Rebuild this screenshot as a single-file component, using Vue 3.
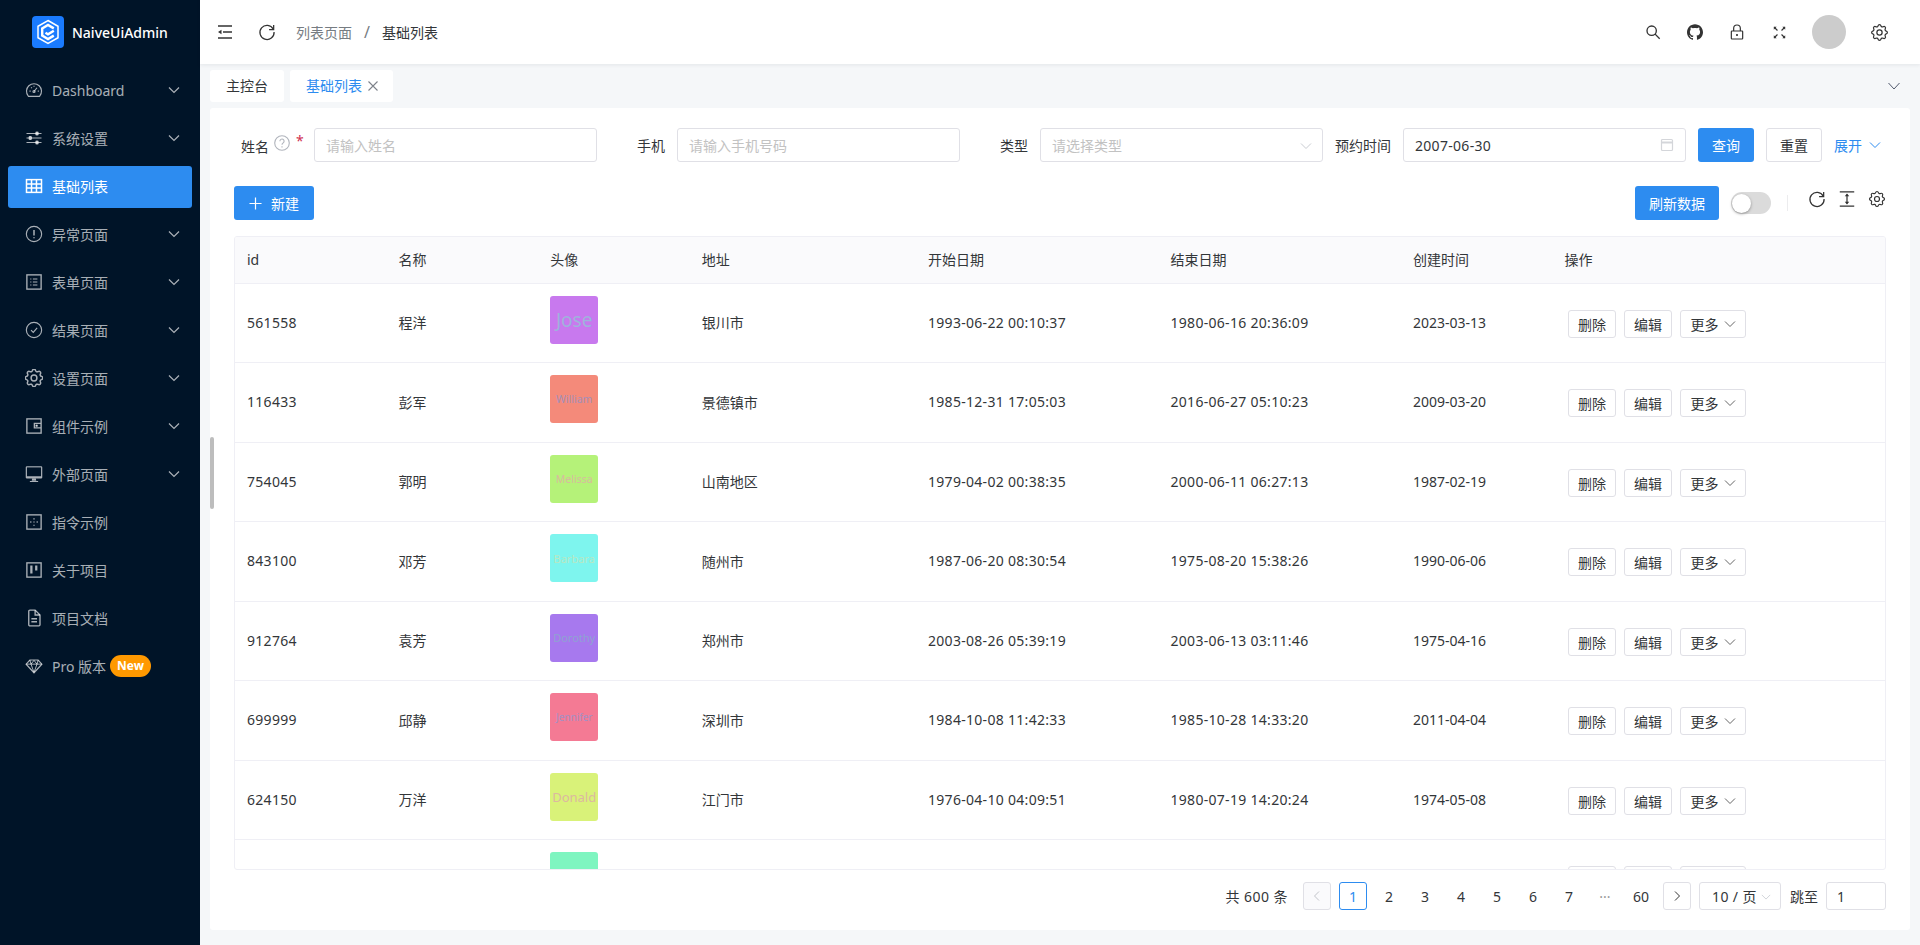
<script setup>
const gear = '<path d="M10.325 4.317c.426-1.756 2.924-1.756 3.35 0a1.724 1.724 0 0 0 2.573 1.066c1.543-.94 3.31.826 2.37 2.37a1.724 1.724 0 0 0 1.065 2.572c1.756.426 1.756 2.924 0 3.35a1.724 1.724 0 0 0-1.066 2.573c.94 1.543-.826 3.31-2.37 2.37a1.724 1.724 0 0 0-2.572 1.065c-.426 1.756-2.924 1.756-3.35 0a1.724 1.724 0 0 0-2.573-1.066c-1.543.94-3.31-.826-2.37-2.37a1.724 1.724 0 0 0-1.065-2.572c-1.756-.426-1.756-2.924 0-3.35a1.724 1.724 0 0 0 1.066-2.573c-.94-1.543.826-3.31 2.37-2.37c1 .608 2.296.07 2.572-1.065z"/><circle cx="12" cy="12" r="3"/>'
const refresh = '<path d="M19.5 8.5A8.5 8.5 0 1 0 20.5 12"/><path d="M20 3.5v5.5h-5.5" stroke-linejoin="miter"/>'
const icons = {
  dash: '<path d="M5.2 20.5h13.6a1 1 0 0 0 .8-.4A10 10 0 1 0 4.4 20.1a1 1 0 0 0 .8.4z"/><path d="M12 14l4-5M6 13.5h1.5M17 13.5h1.5M8.2 8.5l1 1M12 6.2v1.5"/><circle cx="12" cy="14" r="1.4"/>',
  slider: '<path d="M2 6h20M2 12h20M2 18h20"/><rect x="14.5" y="4" width="3" height="4" rx="1" fill="currentColor"/><rect x="5.5" y="10" width="3" height="4" rx="1" fill="currentColor"/><rect x="14.5" y="16" width="3" height="4" rx="1" fill="currentColor"/>',
  table: '<rect x="2" y="3.5" width="20" height="17" stroke-width="2"/><path d="M2 9.2h20M2 14.8h20M8.7 3.5v17M15.3 3.5v17" stroke-width="2"/>',
  warn: '<circle cx="12" cy="12" r="10.2"/><path d="M12 6.5v7.5M12 16.2v1.6" stroke-width="2"/>',
  form: '<rect x="2.5" y="2.5" width="19" height="19" stroke-width="1.8"/><path d="M10.5 8h6M10.5 12h6M10.5 16h6M7 8h1.5M7 12h1.5M7 16h1.5" stroke-width="1.6"/>',
  check: '<circle cx="12" cy="12" r="10.2"/><path d="M8 12.3l3 3 5.2-6"/>',
  gear,
  wallet: '<rect x="2.5" y="2.5" width="19" height="19" stroke-width="1.8"/><path d="M21 8.5h-8.5v6H21" stroke-width="1.8"/><circle cx="15.5" cy="11.5" r=".9" fill="currentColor"/>',
  desk: '<path d="M2.5 1.5h19a1.5 1.5 0 0 1 1.5 1.5v13.5a1.5 1.5 0 0 1-1.5 1.5h-19A1.5 1.5 0 0 1 1 16.500V3a1.500 1.500 0 0 1 1.500-1.500z" fill="currentColor" stroke="none"/><rect x="2.600" y="3.200" width="18.800" height="11.800" fill="#001428" stroke="none"/><path d="M9.500 18h5l.5 3h-6z M6.500 21.200h11v1.300h-11z" fill="currentColor" stroke="none"/>',
  direct: '<rect x="2.500" y="2.500" width="19" height="19" stroke-width="1.800"/><path d="M12 7v1.500M12 11.200v1.500M12 15.500V17M7 12h1.500M15.500 12H17" stroke-width="1.800"/>',
  trello: '<rect x="2.500" y="2.500" width="19" height="19" stroke-width="1.800"/><path d="M8.500 6v10.500M15 6v6.500" stroke-width="3"/>',
  file: '<path d="M5 3a1.500 1.500 0 0 1 1.500-1.500h7L20 8v13a1.500 1.500 0 0 1-1.500 1.500h-12A1.500 1.500 0 0 1 5 21z" stroke-width="1.800"/><path d="M13.500 1.500V8H20M8.500 13h7.500M8.500 17h7.500" stroke-width="1.800"/>',
  gem: '<path d="M6.500 4h11L22.500 9.500 12 21 1.500 9.500z" stroke-width="1.600"/><path d="M1.500 9.500h21M8 9.500l4 11 4-11M6.500 4 8 9.500l4-5 4 5 1.500-5.500" stroke-width="1.300"/>',
}
const menu = [
  { t: 'Dashboard', i: 'dash', c: 1 },
  { t: '系统设置', i: 'slider', c: 1 },
  { t: '基础列表', i: 'table', active: 1 },
  { t: '异常页面', i: 'warn', c: 1 },
  { t: '表单页面', i: 'form', c: 1 },
  { t: '结果页面', i: 'check', c: 1 },
  { t: '设置页面', i: 'gear', c: 1, box: '2.700 2.700 18.600 18.600' },
  { t: '组件示例', i: 'wallet', c: 1 },
  { t: '外部页面', i: 'desk', c: 1 },
  { t: '指令示例', i: 'direct' },
  { t: '关于项目', i: 'trello' },
  { t: '项目文档', i: 'file' },
  { t: 'Pro 版本', i: 'gem', badge: 'New' },
]
const heads = ['id', '名称', '头像', '地址', '开始日期', '结束日期', '创建时间', '操作']
const rows = [
  ['561558', '程洋', 'Jose', '银川市', '1993-06-22 00:10:37', '1980-06-16 20:36:09', '2023-03-13', '#c879ee', '#9fb2dc', 19],
  ['116433', '彭军', 'William', '景德镇市', '1985-12-31 17:05:03', '2016-06-27 05:10:23', '2009-03-20', '#f48a7a', '#a58fb8', 10.5],
  ['754045', '郭明', 'Melissa', '山南地区', '1979-04-02 00:38:35', '2000-06-11 06:27:13', '1987-02-19', '#b5f279', '#d8bb9e', 10.5],
  ['843100', '邓芳', 'Barbara', '随州市', '1987-06-20 08:30:54', '1975-08-20 15:38:26', '1990-06-06', '#7ef5ee', '#b8e8c4', 11],
  ['912764', '袁芳', 'Dorothy', '郑州市', '2003-08-26 05:39:19', '2003-06-13 03:11:46', '1975-04-16', '#a779ee', '#8fa2d2', 11],
  ['699999', '邱静', 'Jennifer', '深圳市', '1984-10-08 11:42:33', '1985-10-28 14:33:20', '2011-04-04', '#f47a94', '#a590c4', 10],
  ['624150', '万洋', 'Donald', '江门市', '1976-04-10 04:09:51', '1980-07-19 14:20:24', '1974-05-08', '#d9f279', '#dcb8a0', 13],
  ['', '', '', '', '', '', '', '#7ef5c0', '#b8e8c4', 10],
]
const pages = ['2', '3', '4', '5', '6', '7', '···', '60']
</script>

<template>
  <div class="app">
    <aside class="side">
      <div class="brand">
        <span class="logo">
          <svg viewBox="0 0 32 32" width="32" height="32" fill="none" stroke="#fff">
            <path d="M16 4.500l10 5.800v11.400L16 27.500 6 21.700V10.300z" stroke-width="1.500"/>
            <path d="M21.800 12.400 16 9 10.200 12.400v7.200L16 23l5.800-3.400" stroke-width="2.400"/>
            <path d="M13.500 16.800l2.500 1.500 5.800-3.500" stroke-width="2.400"/>
          </svg>
        </span>
        <span class="brand-t">NaiveUiAdmin</span>
      </div>
      <nav class="menu">
        <div v-for="m in menu" :key="m.t" class="mi" :class="{ on: m.active }">
          <svg class="mi-ic" :viewBox="m.box || '0 0 24 24'" fill="none" stroke="currentColor" stroke-width="1.500" v-html="icons[m.i]"></svg>
          <span class="mi-t">{{ m.t }}</span>
          <span v-if="m.badge" class="badge">{{ m.badge }}</span>
          <svg v-if="m.c" class="mi-ch" viewBox="0 0 12 12" fill="none" stroke="currentColor" stroke-width="1.200"><path d="M1 3.500l5 5 5-5"/></svg>
        </div>
      </nav>
    </aside>

    <div class="main">
      <header class="top">
        <div class="top-l">
          <svg class="tic first" viewBox="0 0 14 14" fill="none" stroke="#333" stroke-width="1.300"><path d="M0 1h14M5 7h9M0 13h14"/><path d="M3.500 4.800 0 7l3.500 2.200z" fill="#333" stroke="none"/></svg>
          <svg class="tic ref" viewBox="0 0 24 24" fill="none" stroke="#333" stroke-width="1.500" v-html="refresh"></svg>
          <span class="crumb g">列表页面</span><span class="sl">/</span><span class="crumb">基础列表</span>
        </div>
        <div class="top-r">
          <svg class="hi" viewBox="0 0 24 24" fill="none" stroke="#333" stroke-width="2"><circle cx="10" cy="10" r="7"/><path d="M15.200 15.200 22 22"/></svg>
          <svg class="hi" viewBox="0 0 24 24" fill="#333"><path d="M12 .297c-6.630 0-12 5.373-12 12 0 5.303 3.438 9.800 8.205 11.385.6.113.82-.258.82-.577 0-.285-.01-1.040-.015-2.040-3.338.724-4.042-1.610-4.042-1.610C4.422 18.070 3.633 17.700 3.633 17.700c-1.087-.744.084-.729.084-.729 1.205.084 1.838 1.236 1.838 1.236 1.070 1.835 2.809 1.305 3.495.998.108-.776.417-1.305.76-1.605-2.665-.3-5.466-1.332-5.466-5.930 0-1.310.465-2.380 1.235-3.220-.135-.303-.54-1.523.105-3.176 0 0 1.005-.322 3.300 1.230.96-.267 1.980-.399 3-.405 1.020.006 2.040.138 3 .405 2.280-1.552 3.285-1.230 3.285-1.230.645 1.653.24 2.873.12 3.176.765.84 1.230 1.910 1.230 3.220 0 4.610-2.805 5.625-5.475 5.920.42.36.81 1.096.81 2.220 0 1.606-.015 2.896-.015 3.286 0 .315.21.69.825.57C20.565 22.092 24 17.592 24 12.297c0-6.627-5.373-12-12-12"/></svg>
          <svg class="hi" viewBox="0 0 24 24" fill="none" stroke="#333" stroke-width="1.800"><rect x="3.500" y="10.500" width="17" height="12" rx="1"/><path d="M7 10.500V6.500a5 5 0 0 1 10 0v4"/><path d="M12 15v3" stroke-width="2.500"/></svg>
          <svg class="hi sm" viewBox="0 0 16 16" fill="none" stroke="#333" stroke-width="1.500"><path d="M1.500 1.500l4 4M14.500 1.500l-4 4M1.500 14.500l4-4M14.500 14.500l-4-4"/><path d="M1 4.500V1h3.500zM15 4.500V1h-3.500zM1 11.500V15h3.500zM15 11.500V15h-3.500z" fill="#333" stroke="none"/></svg>
          <span class="ava"></span>
          <svg class="hi hg" viewBox="0 0 24 24" fill="none" stroke="#333" stroke-width="1.400" v-html="gear"></svg>
        </div>
      </header>

      <div class="tabs">
        <div class="tab">主控台</div>
        <div class="tab act">基础列表<svg class="x" viewBox="0 0 12 12" fill="none" stroke="#7d828a" stroke-width="1.100"><path d="M1.500 1.500l9 9M10.500 1.500l-9 9"/></svg></div>
        <svg class="tabs-ch" viewBox="0 0 12 12" fill="none" stroke="#515a6e" stroke-width="1"><path d="M.5 3l5.500 6 5.500-6"/></svg>
      </div>

      <section class="card">
        <div class="form">
          <div class="fi">
            <label class="lab lab-n"><span class="nm">姓名</span><svg class="q" viewBox="0 0 16 16" fill="none" stroke="#b0b4bc" stroke-width="1.100"><circle cx="8" cy="8" r="7.300"/><path d="M5.900 6.200a2.100 2.100 0 1 1 3.300 1.700c-.7.5-1.200.9-1.200 1.900M8 11.300v1.100"/></svg><span class="star">*</span></label>
            <div class="inp ph">请输入姓名</div>
          </div>
          <div class="fi"><label class="lab">手机</label><div class="inp ph">请输入手机号码</div></div>
          <div class="fi"><label class="lab">类型</label>
            <div class="inp ph">请选择类型<svg class="sel" viewBox="0 0 12 12" fill="none" stroke="#c9ccd2" stroke-width="1"><path d="M1 3.500l5 5 5-5"/></svg></div>
          </div>
          <div class="fi"><label class="lab">预约时间</label>
            <div class="inp dt">2007-06-30<svg class="cal" viewBox="0 0 14 14" fill="none" stroke="#d4d6da" stroke-width="1.200"><rect x="1.500" y="1.500" width="11" height="11" rx="1"/><path d="M1.500 4.500h11" stroke-width="2"/></svg></div>
          </div>
          <button class="btn pri q-btn">查询</button>
          <button class="btn def q-btn">重置</button>
          <span class="more">展开<svg viewBox="0 0 12 12" fill="none" stroke="#2d8cf0" stroke-width="1"><path d="M1 3.500l5 5 5-5"/></svg></span>
        </div>

        <div class="bar">
          <button class="btn pri add"><svg viewBox="0 0 14 14" fill="none" stroke="#fff" stroke-width="1.300"><path d="M7 .5v13M.5 7h13"/></svg>新建</button>
          <div class="bar-r">
            <button class="btn pri rf">刷新数据</button>
            <span class="sw"><i></i></span>
            <span class="dv"></span>
            <svg class="ti" viewBox="0 0 24 24" fill="none" stroke="#333" stroke-width="1.500" v-html="refresh"></svg>
            <svg class="ti" viewBox="0 0 18 18" fill="none" stroke="#333" stroke-width="1.100"><path d="M2.500 2.500h13M2.500 15.500h13M9 5v8"/><path d="M9 4l2 2.500H7zM9 14l2-2.500H7z" fill="#333" stroke="none"/></svg>
            <svg class="ti" viewBox="0 0 24 24" fill="none" stroke="#333" stroke-width="1.400" v-html="gear"></svg>
          </div>
        </div>

        <div class="tbl">
          <div class="row head"><div v-for="h in heads" :key="h" class="cell">{{ h }}</div></div>
          <div v-for="(r, i) in rows" :key="i" class="row body">
            <div class="cell num">{{ r[0] }}</div>
            <div class="cell">{{ r[1] }}</div>
            <div class="cell cav"><div class="pic" :style="{ background: r[7], color: r[8], fontSize: r[9] + 'px' }">{{ r[2] }}</div></div>
            <div class="cell">{{ r[3] }}</div>
            <div class="cell num">{{ r[4] }}</div>
            <div class="cell num">{{ r[5] }}</div>
            <div class="cell">{{ r[6] }}</div>
            <div class="cell ops">
              <button class="sb"><template v-if="r[0]">删除</template></button><button class="sb"><template v-if="r[0]">编辑</template></button>
              <button class="sb mr"><template v-if="r[0]">更多<svg viewBox="0 0 12 12" fill="none" stroke="#666" stroke-width="1"><path d="M1 3.500l5 5 5-5"/></svg></template></button>
            </div>
          </div>
        </div>

        <div class="pager">
          <span class="tot">共 600 条</span>
          <span class="pg dis"><svg viewBox="0 0 12 12" fill="none" stroke="#c2c4ca" stroke-width="1"><path d="M8 1.500 3.500 6 8 10.500"/></svg></span>
          <span class="pg cur">1</span>
          <span v-for="p in pages" :key="p" class="pg nb" :class="{ dots: p === '···' }">{{ p }}</span>
          <span class="pg"><svg viewBox="0 0 12 12" fill="none" stroke="#333" stroke-width="1"><path d="M4 1.500 8.500 6 4 10.500"/></svg></span>
          <span class="psz">10 / 页<svg viewBox="0 0 12 12" fill="none" stroke="#c9ccd2" stroke-width="1"><path d="M1 3.500l5 5 5-5"/></svg></span>
          <span class="jmp">跳至</span>
          <span class="jin">1</span>
        </div>
      </section>
      <span class="thumb"></span>
    </div>
  </div>
</template>

<style>
html, body { margin: 0; padding: 0; }
</style>

<style scoped>
.app { display: flex; width: 1920px; height: 945px; overflow: hidden; font-family: "Noto Sans", "Noto Sans CJK SC", sans-serif; font-size: 14px; color: #333639; }
.side { width: 200px; flex: none; background: #001428; color: rgba(255, 255, 255, .67); }
.brand { height: 64px; display: flex; align-items: center; padding-left: 32px; }
.logo { width: 32px; height: 32px; border-radius: 4px; background: #1a7bff; display: block; }
.logo svg { display: block; }
.brand-t { margin-left: 8px; color: #fff; font-weight: 500; font-size: 14px; }
.menu { display: flex; flex-direction: column; gap: 6px; padding: 6px 8px 0; }
.mi { height: 42px; box-sizing: border-box; display: flex; align-items: center; padding: 0 0 2px 17px; border-radius: 3px; position: relative; }
.mi.on { background: #2d8cf0; color: #fff; }
.mi-ic { width: 18px; height: 18px; flex: none; }
.mi-t { margin-left: 9px; }
.mi-ch { width: 12px; height: 12px; position: absolute; left: 160px; top: 14px; }
.badge { margin-left: 4px; background: #f90; color: #fff; font-size: 12px; font-weight: 700; height: 22px; line-height: 22px; padding: 0 7px; border-radius: 11px; }

.main { flex: 1; min-width: 0; background: #f5f7f9; display: flex; flex-direction: column; position: relative; }
.top { height: 64px; flex: none; background: #fff; box-shadow: 0 1px 4px rgba(0, 21, 41, .08); display: flex; justify-content: space-between; align-items: center; position: relative; }
.top-l { display: flex; align-items: center; padding-left: 18px; }
.tic { display: block; flex: none; }
.first { width: 14px; height: 14px; }
.ref { width: 20px; height: 20px; margin-left: 25px; }
.crumb { font-size: 14px; color: #333639; }
.crumb.g { color: #767c82; margin-left: 19px; }
.sl { color: #767c82; margin: 0 12px; width: 6px; text-align: center; font-size: 16px; }
.top-r { display: flex; align-items: center; padding-right: 30.500px; }
.hi { width: 16px; height: 16px; margin-left: 26px; display: block; flex: none; }
.hi.sm { width: 13px; height: 13px; margin-left: 28px; margin-right: 1px; }
.ava { width: 34px; height: 34px; border-radius: 50%; background: #ccc; margin-left: 25.500px; }
.hi.hg { width: 21px; height: 21px; margin-left: 22.500px; }

.tabs { height: 44px; flex: none; display: flex; align-items: center; padding-left: 10px; gap: 6px; position: relative; }
.tab { height: 32px; line-height: 32px; padding: 0 16px; background: #fff; border-radius: 3px; box-sizing: border-box; display: flex; align-items: center; }
.tab.act { color: #2d8cf0; padding-right: 0; width: 103px; }
.x { width: 12px; height: 12px; margin-left: 5px; }
.tabs-ch { width: 12px; height: 12px; position: absolute; right: 20px; top: 16px; }

.card { margin: 0 10px; background: #fff; border-radius: 3px; padding: 20px 24px; height: 822px; box-sizing: border-box; }
.form { display: flex; align-items: center; height: 34px; }
.fi { width: 363px; display: flex; flex: none; align-items: center; }
.lab { width: 80px; flex: none; box-sizing: border-box; padding-right: 12px; display: flex; justify-content: flex-end; align-items: center; color: #333639; }
.lab-n { align-items: flex-start; height: 34px; }
.nm { margin-top: 8px; }
.q { width: 16px; height: 16px; margin: 7px 0 0 5px; flex: none; }
.star { color: #d03050; margin: 3px 0 0 6px; width: 6px; }
.inp { width: 283px; height: 34px; box-sizing: border-box; border: 1px solid #e0e0e6; border-radius: 3px; display: flex; align-items: center; padding: 0 11px; position: relative; }
.ph { color: #c2c2c2; }
.dt { color: #333639; letter-spacing: .3px; }
.sel { width: 12px; height: 12px; position: absolute; right: 10px; top: 11px; }
.cal { width: 14px; height: 14px; position: absolute; right: 11px; top: 9px; }
.btn { height: 34px; border-radius: 3px; border: 1px solid transparent; font: inherit; padding: 0; display: inline-flex; align-items: center; justify-content: center; box-sizing: border-box; }
.pri { background: #2d8cf0; color: #fff; }
.def { background: #fff; color: #333639; border-color: #e0e0e6; }
.q-btn { width: 56px; margin-left: 12px; }
.more { color: #2d8cf0; display: flex; align-items: center; margin-left: 12px; }
.more svg { width: 12px; height: 12px; margin-left: 7px; }

.bar { display: flex; justify-content: space-between; align-items: center; margin-top: 24px; height: 34px; }
.add { width: 80px; }
.add svg { width: 13px; height: 13px; margin-right: 9px; }
.bar-r { display: flex; align-items: center; }
.rf { width: 84px; }
.sw { width: 40px; height: 22px; margin-left: 12px; border-radius: 11px; background: #dbdbdb; display: block; position: relative; }
.sw i { position: absolute; left: 1px; top: 2px; width: 19px; height: 19px; border-radius: 50%; background: #fff; box-shadow: 0 1px 3px rgba(0, 0, 0, .35); }
.dv { width: 1px; height: 16px; background: #ececee; margin-left: 16px; margin-right: 19px; }
.ti { width: 20px; height: 20px; display: block; margin-right: 10px; flex: none; margin-top: -8px; }
.ti:last-child { margin-right: -1px; }

.tbl { margin-top: 16px; height: 634px; border: 1px solid #efeff5; border-radius: 3px; box-sizing: border-box; overflow: hidden; }
.row { display: grid; grid-template-columns: 151.600px 151.600px 151.600px 226.200px 242.500px 242.500px 151.600px 1fr; border-bottom: 1px solid #efeff5; box-sizing: border-box; }
.head { height: 46.500px; background: #fafafc; }
.body { height: 79.500px; }
.cell { padding: 0 12px 1px; display: flex; align-items: center; min-width: 0; }
.num { letter-spacing: .3px; }
.cav { align-items: flex-start; padding-top: 12px; }
.pic { width: 48px; height: 48px; border-radius: 3px; display: flex; align-items: center; justify-content: center; overflow: hidden; white-space: nowrap; letter-spacing: 0; }
.ops { padding-left: 15.500px; padding-top: 2px; padding-bottom: 0; gap: 8px; }
.sb { height: 28px; width: 48px; padding: 0; background: #fff; border: 1px solid #e0e0e6; border-radius: 3px; font: inherit; color: #333639; display: inline-flex; align-items: center; justify-content: center; box-sizing: border-box; }
.mr { width: 66px; }
.mr svg { width: 12px; height: 12px; margin-left: 5px; }

.pager { display: flex; align-items: center; justify-content: flex-end; margin-top: 12px; height: 28px; }
.tot { margin-right: 15px; letter-spacing: .45px; }
.pg { width: 28px; height: 28px; box-sizing: border-box; border: 1px solid #e0e0e6; border-radius: 3px; display: flex; align-items: center; justify-content: center; margin-right: 8px; flex: none; }
.pg svg { width: 12px; height: 12px; }
.dis { background: #fafafc; }
.cur { border-color: #2d8cf0; color: #2d8cf0; }
.nb { border-color: transparent; }
.dots { color: #999; }
.psz { width: 82px; height: 28px; box-sizing: border-box; border: 1px solid #e0e0e6; border-radius: 3px; display: flex; align-items: center; padding-left: 12px; position: relative; letter-spacing: .4px; }
.psz svg { width: 10px; height: 10px; position: absolute; right: 9px; top: 9px; }
.jmp { margin-left: 9px; margin-right: 8px; }
.jin { width: 60px; height: 28px; box-sizing: border-box; border: 1px solid #e0e0e6; border-radius: 3px; display: flex; align-items: center; padding-left: 10px; }
.thumb { position: absolute; left: 10px; top: 437px; width: 4px; height: 72px; border-radius: 2px; background: #bdbdbd; }
</style>
